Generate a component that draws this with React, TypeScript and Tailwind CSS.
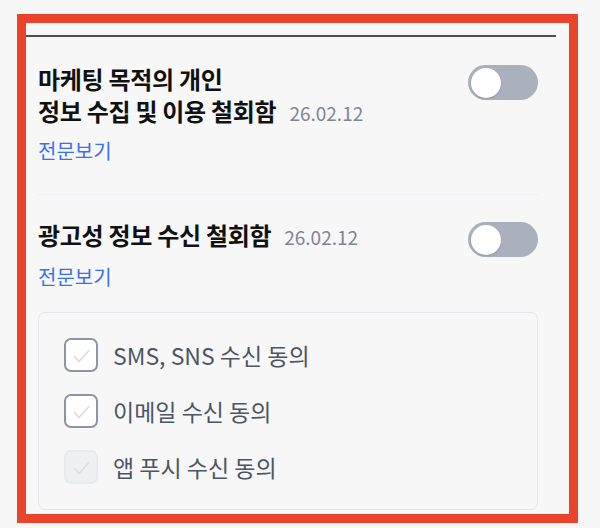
import React from "react";

function Toggle() {
  return (
    <div className="w-[70px] h-[35px] rounded-full bg-[#aab1bc] p-[2.5px] flex items-center shrink-0">
      <div className="w-[30px] h-[30px] rounded-full bg-white shadow-[0_1px_2px_rgba(0,0,0,0.15)]" />
    </div>
  );
}

function Check({ disabled }: { disabled?: boolean }) {
  return (
    <div
      className={
        disabled
          ? "w-[34px] h-[34px] rounded-[7px] border-2 border-[#e7eaee] bg-[#eef0f4] flex items-center justify-center shrink-0"
          : "w-[34px] h-[34px] rounded-[7px] border-2 border-[#8b95a4] bg-white flex items-center justify-center shrink-0"
      }
    >
      <svg width="34" height="34" viewBox="0 0 34 34" className="-m-[2px]">
        <path
          d="M10.5 18.5 L15 23.5 L25 12.5"
          fill="none"
          stroke={disabled ? "#d9dde3" : "#d6dae0"}
          strokeWidth="1.6"
          strokeLinecap="round"
          strokeLinejoin="round"
        />
      </svg>
    </div>
  );
}

const consents = [
  { label: "SMS, SNS 수신 동의", disabled: false },
  { label: "이메일 수신 동의", disabled: false },
  { label: "앱 푸시 수신 동의", disabled: true },
];

export default function App() {
  return (
    <div
      className="w-[600px] h-[528px] bg-[#f7f7f7] pl-[17px] pt-[14px] overflow-hidden"
      style={{ fontFamily: '"Noto Sans CJK KR", "Noto Sans", sans-serif' }}
    >
      <div className="w-[561px] h-[509px] border-[9px] border-[#e9432a] bg-[#f7f7f7] pt-[12px] overflow-hidden">
        {/* 상단 구분선 */}
        <div className="w-[530px] h-[2px] bg-[#4d4d4d]" />

        <div className="w-[500px] ml-[12px]">
          {/* 마케팅 목적 */}
          <section className="pt-[26px]">
            <div className="flex items-start justify-between">
              <div className="text-[24px] leading-[32px] font-bold text-[#111] tracking-[-0.3px]">
                <p>마케팅 목적의 개인</p>
                <p>
                  정보 수집 및 이용 철회함
                  <span className="ml-[13px] text-[19px] font-normal text-[#7d8694] tracking-normal">
                    26.02.12
                  </span>
                </p>
              </div>
              <div className="pt-[2px]">
                <Toggle />
              </div>
            </div>
            <p className="mt-[9px] text-[20px] leading-[26px] text-[#3b6ef8]">전문보기</p>
          </section>

          <div className="mt-[30px] h-px bg-[#edf0f4]" />

          {/* 광고성 정보 */}
          <section className="pt-[24px]">
            <div className="flex justify-between h-[31px]">
              <p className="text-[24px] leading-[31px] font-bold text-[#111] tracking-[-0.3px] whitespace-nowrap">
                광고성 정보 수신 철회함
                <span className="ml-[13px] text-[19px] font-normal text-[#7d8694] tracking-normal">
                  26.02.12
                </span>
              </p>
              <div className="mt-[3px]">
                <Toggle />
              </div>
            </div>
            <p className="mt-[14px] text-[20px] leading-[26px] text-[#3b6ef8]">전문보기</p>
          </section>

          <div className="mt-[22px] border border-[#e2e5ea] rounded-[7px] px-[25px] py-[25px] flex flex-col gap-[22px]">
            {consents.map((c) => (
              <div key={c.label} className="flex items-center gap-[15px]">
                <Check disabled={c.disabled} />
                <span className="text-[23px] leading-[34px] text-[#4b5565]">{c.label}</span>
              </div>
            ))}
          </div>
        </div>
      </div>
    </div>
  );
}
